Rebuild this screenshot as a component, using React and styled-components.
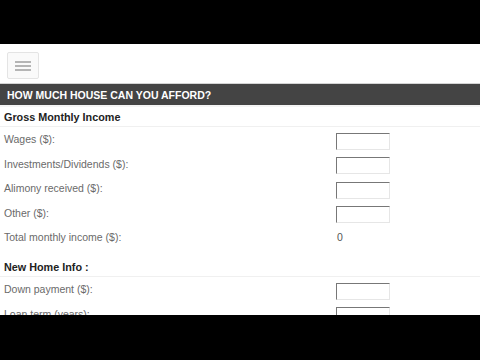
import React from 'react';
import styled, { createGlobalStyle } from 'styled-components';

const Global = createGlobalStyle`
  html, body {
    margin: 0;
    padding: 0;
    background: #000;
  }
  body {
    font-family: "Liberation Sans", Arial, sans-serif;
  }
`;

const Screen = styled.div`
  width: 480px;
  height: 360px;
  background: #000;
  padding-top: 44px;
  box-sizing: border-box;
  overflow: hidden;
`;

const Page = styled.div`
  height: 271px;
  background: #fff;
  overflow: hidden;
`;

const Toolbar = styled.div`
  height: 39px;
  display: flex;
  align-items: flex-start;
  padding: 8px 0 0 7px;
  box-sizing: border-box;
`;

const MenuButton = styled.button`
  width: 32px;
  height: 27px;
  padding: 0;
  border: 1px solid #e4e4e4;
  border-radius: 2px;
  background: #fafafa;
  display: flex;
  flex-direction: column;
  align-items: center;
  justify-content: center;
  gap: 2px;
`;

const MenuLine = styled.span`
  display: block;
  width: 16px;
  height: 2px;
  background: #b5b5b5;
`;

const Header = styled.div`
  height: 21px;
  border-top: 1px solid #d4d4d4;
  border-bottom: 2px solid #f4f4f4;
  background: #444;
  color: #fff;
  font-size: 10.5px;
  font-weight: bold;
  display: flex;
  align-items: center;
  padding-left: 7px;
`;

const Section = styled.div`
  padding: 0 0 0 4px;
`;

const SectionTitle = styled.div`
  font-size: 10.8px;
  font-weight: bold;
  color: #222;
  height: 18px;
  line-height: 18px;
  margin-top: ${p => p.$top || 0}px;
  border-bottom: 1px solid #f0f0f0;
  margin-left: -4px;
  padding-left: 4px;
`;

const Row = styled.div`
  display: grid;
  grid-template-columns: 332px 1fr;
  align-items: center;
  height: 24.5px;
`;

const Label = styled.span`
  font-size: 10.5px;
  color: #6a6a6a;
`;

const Field = styled.input`
  width: 54px;
  height: 17px;
  box-sizing: border-box;
  border: 1px solid;
  border-color: #777 #e6e6e6 #e6e6e6 #777;
  background: #fff;
  padding: 0;
  margin: 4px 0 0;
`;

const Value = styled.span`
  font-size: 10.5px;
  color: #555;
  padding-left: 1px;
`;

const income = ['Wages ($):', 'Investments/Dividends ($):', 'Alimony received ($):', 'Other ($):'];
const home = ['Down payment ($):', 'Loan term (years):'];

export default function App() {
  return (
    <Screen>
      <Global />
      <Page>
        <Toolbar>
          <MenuButton>
            <MenuLine />
            <MenuLine />
            <MenuLine />
          </MenuButton>
        </Toolbar>
        <Header>HOW MUCH HOUSE CAN YOU AFFORD?</Header>
        <Section>
          <SectionTitle $top={1}>Gross Monthly Income</SectionTitle>
          {income.map(l => (
            <Row key={l}>
              <Label>{l}</Label>
              <Field />
            </Row>
          ))}
          <Row>
            <Label>Total monthly income ($):</Label>
            <Value>0</Value>
          </Row>
          <SectionTitle $top={8.5}>New Home Info :</SectionTitle>
          {home.map(l => (
            <Row key={l}>
              <Label>{l}</Label>
              <Field />
            </Row>
          ))}
        </Section>
      </Page>
    </Screen>
  );
}
